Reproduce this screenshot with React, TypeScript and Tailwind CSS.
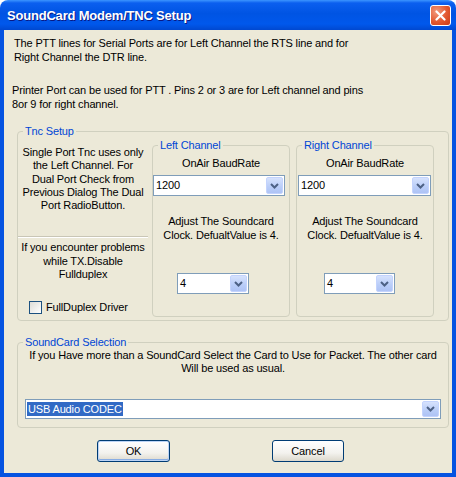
import React from "react";

const font = { fontFamily: '"Liberation Sans", Arial, sans-serif' };

function Chevron() {
  return (
    <svg width="9" height="6" viewBox="0 0 9 6">
      <path d="M1 1 L4.5 4.5 L8 1" fill="none" stroke="#4d6185" strokeWidth="2" />
    </svg>
  );
}

function Combo({ value, className, selected }: { value: string; className: string; selected?: boolean }) {
  return (
    <div className={`flex items-stretch bg-white border border-[#7f9db9] ${className}`}>
      <div className="flex-1 flex items-center pl-[1px] text-[11px] text-black">
        {selected ? (
          <span className="bg-[#316ac5] text-white px-[1px] leading-[14px]">{value}</span>
        ) : (
          <span className="pl-[1px]">{value}</span>
        )}
      </div>
      <div className="w-[17px] m-[1px] rounded-[2px] border border-[#c3d3fd] bg-[linear-gradient(to_bottom,#d6e2fd,#b9cdf8_60%,#aec3f5)] flex items-center justify-center">
        <Chevron />
      </div>
    </div>
  );
}

function Group({ title, className, children }: { title: string; className: string; children: React.ReactNode }) {
  return (
    <fieldset className={`border border-[#d0d0bf] rounded-[4px] ${className}`}>
      <legend className="ml-[5px] px-[2px] text-[11px] leading-[14px] text-[#0046d5]">{title}</legend>
      {children}
    </fieldset>
  );
}

function Button({ label, def, className }: { label: string; def?: boolean; className: string }) {
  return (
    <div
      className={`h-[22px] rounded-[3px] border border-[#003c74] bg-[linear-gradient(to_bottom,#ffffff,#f3f2ee_60%,#dcd8cc)] flex items-center justify-center text-[11px] text-black ${
        def ? "shadow-[inset_0_0_0_1px_#bcd4f6,inset_0_-1px_0_1px_#89ade4]" : ""
      } ${className}`}
    >
      {label}
    </div>
  );
}

export default function App() {
  return (
    <div className="w-[456px] h-[477px] flex flex-col bg-white" style={font}>
      {/* Title bar */}
      <div className="h-[30px] rounded-t-[8px] bg-[linear-gradient(to_bottom,#3c95ff_0%,#0b5fef_10%,#0054e3_45%,#0058ec_80%,#0048d0_100%)] flex items-center pl-[7px] pr-[5px]">
        <div className="flex-1 text-white font-bold text-[13px] tracking-[-0.2px] [text-shadow:1px_1px_0_#0a1883] pt-[1px]">
          SoundCard Modem/TNC Setup
        </div>
        <div className="w-[21px] h-[21px] rounded-[3px] border border-white bg-[radial-gradient(circle_at_30%_30%,#f29a7e,#e2582f_55%,#c93a16)] flex items-center justify-center">
          <svg width="11" height="11" viewBox="0 0 11 11">
            <path d="M1.5 1.5 L9.5 9.5 M9.5 1.5 L1.5 9.5" stroke="white" strokeWidth="2.2" strokeLinecap="round" />
          </svg>
        </div>
      </div>

      {/* Body */}
      <div className="flex-1 flex flex-col bg-[#ece9d8] border-x-[4px] border-b-[4px] border-[#0553e1] text-[11px] tracking-[-0.15px] text-black">
        <div className="mt-[6px] pl-[10px] leading-[14px]">
          The PTT lines for Serial Ports are for Left Channel the RTS line and for
          <br />
          Right Channel the DTR line.
        </div>
        <div className="mt-[19px] pl-[8px] leading-[14px]">
          Printer Port can be used for PTT . Pins 2 or 3 are for Left channel and pins
          <br />
          8or 9 for right channel.
        </div>

        <Group title="Tnc Setup" className="mt-[13px] ml-[13px] w-[432px] h-[197px] pb-[3px]">
          <div className="flex h-full">
            <div className="w-[130px] flex flex-col">
              <div className="mt-[8px] text-center leading-[13.3px] whitespace-nowrap">
                Single Port Tnc uses only
                <br />
                the Left Channel. For
                <br />
                Dual Port Check from
                <br />
                Previous Dialog The Dual
                <br />
                Port RadioButton.
              </div>
              <div className="mt-[24px] border-t border-[#c9c6b6] border-b border-b-white"></div>
              <div className="mt-[3px] text-center leading-[13.3px] whitespace-nowrap">
                If you encounter problems
                <br />
                while TX.Disable
                <br />
                Fullduplex
              </div>
              <div className="mt-[18px] flex items-center ml-[11px]">
                <div className="w-[13px] h-[13px] border border-[#1c5180] bg-[linear-gradient(135deg,#dcdcd7,#ffffff)]"></div>
                <span className="ml-[4px]">FullDuplex Driver</span>
              </div>
            </div>

            <Group title="Left Channel" className="ml-[4px] w-[138px] h-[179px]">
              <div className="flex flex-col">
                <div className="mt-[4px] text-center leading-[14px]">OnAir BaudRate</div>
                <Combo value="1200" className="mt-[5px] w-[132px] h-[21px]" />
                <div className="mt-[18px] text-center leading-[14px]">
                  Adjust The Soundcard
                  <br />
                  Clock. DefualtValue is 4.
                </div>
                <Combo value="4" className="mt-[31px] ml-[24px] w-[72px] h-[21px]" />
              </div>
            </Group>

            <Group title="Right Channel" className="ml-[6px] w-[138px] h-[179px]">
              <div className="flex flex-col">
                <div className="mt-[4px] text-center leading-[14px]">OnAir BaudRate</div>
                <Combo value="1200" className="mt-[5px] ml-[1px] w-[133px] h-[21px]" />
                <div className="mt-[18px] text-center leading-[14px]">
                  Adjust The Soundcard
                  <br />
                  Clock. DefualtValue is 4.
                </div>
                <Combo value="4" className="mt-[31px] ml-[27px] w-[71px] h-[21px]" />
              </div>
            </Group>
          </div>
        </Group>

        <Group title="SoundCard Selection" className="mt-[14px] ml-[13px] w-[432px] pb-[8px]">
          <div className="text-center leading-[13px]">
            If you Have more than a SoundCard Select the Card to Use for Packet. The other card
            <br />
            Will be used as usual.
          </div>
          <Combo value="USB Audio CODEC" selected className="mt-[24px] ml-[7px] w-[416px] h-[20px]" />
        </Group>

        <div className="mt-[12px] flex">
          <Button label="OK" def className="ml-[93px] w-[73px]" />
          <Button label="Cancel" className="ml-[102px] w-[72px]" />
        </div>
      </div>
    </div>
  );
}
